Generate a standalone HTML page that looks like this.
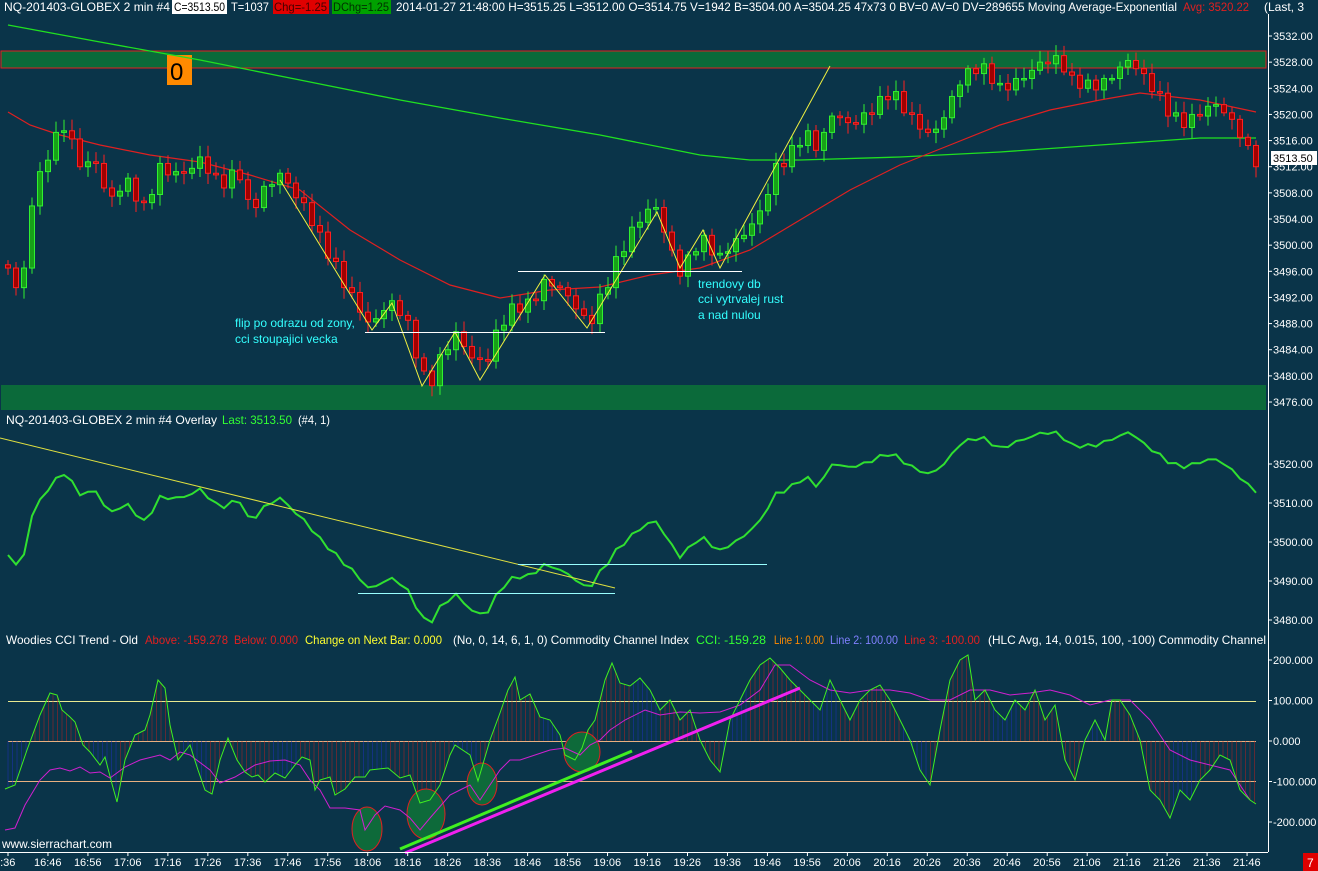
<!DOCTYPE html>
<html><head><meta charset="utf-8">
<style>
html,body{margin:0;padding:0;background:#0a3449;width:1318px;height:871px;overflow:hidden}
svg{display:block;font-family:"Liberation Sans",sans-serif}
</style></head><body>
<svg id="s" width="1318" height="871" viewBox="0 0 1318 871" xmlns="http://www.w3.org/2000/svg">
<rect width="1318" height="871" fill="#0a3449"/>
<rect x="1" y="51" width="1265" height="17" fill="#0b6a3a" stroke="#e0201e" stroke-width="1"/>
<rect x="1" y="385" width="1265" height="25" fill="#0b6a3a"/>
<rect x="167" y="55" width="25" height="30" fill="#ff8a00"/>
<text x="170" y="80" font-size="24" fill="#000">0</text>
<g id="g"></g>
<g font-size="12" fill="#fff">
<text x="4" y="11" textLength="166" lengthAdjust="spacingAndGlyphs">NQ-201403-GLOBEX  2 min   #4</text>
<rect x="172" y="0" width="55" height="14" fill="#fff"/>
<text x="174" y="11" fill="#000" textLength="51" lengthAdjust="spacingAndGlyphs">C=3513.50</text>
<text x="231" y="11" textLength="38" lengthAdjust="spacingAndGlyphs">T=1037</text>
<rect x="273" y="0" width="56" height="14" fill="#e00000"/>
<text x="274" y="11" fill="#400" textLength="53" lengthAdjust="spacingAndGlyphs">Chg=-1.25</text>
<rect x="332" y="0" width="59" height="14" fill="#00a000"/>
<text x="333" y="11" fill="#003000" textLength="56" lengthAdjust="spacingAndGlyphs">DChg=1.25</text>
<text x="396" y="11" textLength="781" lengthAdjust="spacingAndGlyphs">2014-01-27 21:48:00 H=3515.25 L=3512.00 O=3514.75 V=1942 B=3504.00 A=3504.25 47x73 0 BV=0 AV=0 DV=289655 Moving Average-Exponential</text>
<text x="1183" y="11" fill="#e02020" textLength="66" lengthAdjust="spacingAndGlyphs">Avg: 3520.22</text>
<text x="1264" y="11">(Last, 3</text>
</g>
<g font-size="12" fill="#fff">
<text x="6" y="424" textLength="211" lengthAdjust="spacingAndGlyphs">NQ-201403-GLOBEX  2 min   #4 Overlay</text>
<text x="222" y="424" fill="#3f3" textLength="70" lengthAdjust="spacingAndGlyphs">Last: 3513.50</text>
<text x="298" y="424" textLength="32" lengthAdjust="spacingAndGlyphs">(#4, 1)</text>
<text x="6" y="644" textLength="132" lengthAdjust="spacingAndGlyphs">Woodies CCI Trend - Old</text>
<text x="145" y="644" fill="#e02020" textLength="83" lengthAdjust="spacingAndGlyphs">Above: -159.278</text>
<text x="234" y="644" fill="#e02020" textLength="64" lengthAdjust="spacingAndGlyphs">Below: 0.000</text>
<text x="305" y="644" fill="#ffff30" textLength="137" lengthAdjust="spacingAndGlyphs">Change on Next Bar: 0.000</text>
<text x="453" y="644" textLength="236" lengthAdjust="spacingAndGlyphs">(No, 0, 14, 6, 1, 0)  Commodity Channel Index</text>
<text x="696" y="644" fill="#3f3" textLength="70" lengthAdjust="spacingAndGlyphs">CCI: -159.28</text>
<text x="774" y="644" fill="#ff8a00" textLength="50" lengthAdjust="spacingAndGlyphs">Line 1: 0.00</text>
<text x="830" y="644" fill="#8080ff" textLength="68" lengthAdjust="spacingAndGlyphs">Line 2: 100.00</text>
<text x="904" y="644" fill="#e02020" textLength="76" lengthAdjust="spacingAndGlyphs">Line 3: -100.00</text>
<text x="988" y="644" textLength="278" lengthAdjust="spacingAndGlyphs">(HLC Avg, 14, 0.015, 100, -100)  Commodity Channel</text>
<text x="2" y="848" textLength="110" lengthAdjust="spacingAndGlyphs">www.sierrachart.com</text>
</g>
<g font-size="12" fill="#3ff">
<text x="235" y="327">flip po odrazu od zony,</text>
<text x="235" y="343">cci stoupajici vecka</text>
<text x="698" y="288">trendovy db</text>
<text x="698" y="303">cci vytrvalej rust</text>
<text x="698" y="319">a nad nulou</text>
</g>
<line x1="1268.5" y1="14" x2="1268.5" y2="852" stroke="#fff"/>
<line x1="0" y1="852.5" x2="1268" y2="852.5" stroke="#fff"/>
<rect x="1303" y="853" width="15" height="18" fill="#e00000"/>
<text x="1307" y="867" font-size="12" fill="#fff">7</text>
</svg>
<script>
var NS="http://www.w3.org/2000/svg",G=document.getElementById("g");
function el(t,a){var e=document.createElementNS(NS,t);for(var k in a)e.setAttribute(k,a[k]);G.appendChild(e);return e}
function pl(pts,c,w){el("polyline",{points:pts.map(function(p){return p.join(",")}).join(" "),fill:"none",stroke:c,"stroke-width":w||1})}
function interp(k,x){for(var i=0;i<k.length-1;i++){if(x<=k[i+1][0]){var t=(x-k[i][0])/(k[i+1][0]-k[i][0]);return k[i][1]+t*(k[i+1][1]-k[i][1])}}return k[k.length-1][1]}
var P=[[8,3497],[22,3494],[30,3507],[50,3514],[65,3517],[80,3512],[95,3514],[110,3508],[125,3510],[145,3504],[160,3511],[180,3512],[200,3514],[220,3508],[240,3510],[250,3505],[265,3510],[280,3512],[300,3506],[320,3500],[340,3496],[355,3493],[370,3488],[390,3490],[405,3488],[420,3482],[428,3479],[440,3484],[455,3487],[470,3482],[485,3480],[500,3488],[515,3492],[530,3492],[545,3494],[560,3492],[575,3490],[588,3488],[600,3493],[615,3498],[630,3501],[655,3505],[670,3500],[680,3497],[700,3502],[720,3497],[740,3500],[760,3506],[775,3513],[790,3514],[805,3516],[820,3513],[830,3520],[850,3520],[870,3521],[890,3522],[910,3519],[930,3518],[945,3521],[960,3525],[980,3526],[1000,3524],[1020,3527],[1040,3528],[1060,3527],[1070,3524],[1090,3525],[1110,3527],[1130,3528],[1145,3524],[1165,3521],[1180,3520],[1200,3521],[1215,3521],[1230,3518],[1250,3514],[1256,3513.5]];
function py(p){return 36+(3532-p)*6.536}
function oy(p){return 464+(3520-p)*3.9}
function cy(v){return 741-v*0.405}
el("line",{x1:8,y1:701.5,x2:1256,y2:701.5,stroke:"#e8e890","stroke-width":1});
el("line",{x1:8,y1:741.5,x2:1256,y2:741.5,stroke:"#e8b080","stroke-width":1});
el("line",{x1:8,y1:781.5,x2:1256,y2:781.5,stroke:"#e8b080","stroke-width":1});
pl([[8,25],[100,42],[200,60],[300,80],[400,100],[500,118],[600,135],[700,155],[750,160],[800,160],[900,157],[1000,152],[1100,145],[1200,138],[1256,138]],"#20e020",1.3);
pl([[8,112],[30,125],[60,135],[100,145],[150,155],[200,162],[250,175],[300,190],[350,230],[400,260],[450,285],[500,298],[550,290],[600,287],[650,275],[700,268],[750,250],[800,220],[850,190],[900,165],[950,145],[1000,125],[1050,110],[1100,100],[1140,93],[1200,100],[1256,112]],"#e02020",1.2);
var prev=interp(P,8),oc=[];
for(var x=8;x<=1256;x+=8){
 var n=Math.sin(x*0.71)*1.4+Math.sin(x*1.93)*0.9;
 var c=interp(P,x)+n; c=Math.round(c*4)/4;
 var o=prev, hi=Math.max(o,c)+0.5+Math.abs(Math.sin(x*0.37))*1.2, lo=Math.min(o,c)-0.5-Math.abs(Math.cos(x*0.53))*1.2;
 var up=c>=o, col=up?"#30f030":"#ff2020", fil=up?"#18a018":"#a00000";
 el("line",{x1:x,y1:py(hi),x2:x,y2:py(lo),stroke:col,"stroke-width":1});
 var y1=py(Math.max(o,c)),y2=py(Math.min(o,c));
 el("rect",{x:x-2.5,y:y1,width:5,height:Math.max(1.5,y2-y1),fill:fil,stroke:col,"stroke-width":1});
 oc.push([x,oy(interp(P,x)+n*0.6)]);
 prev=c;
}
pl(oc,"#30e030",2);
pl([[0,438],[615,588]],"#e0e040",1);
el("line",{x1:358,y1:593.5,x2:615,y2:593.5,stroke:"#9ff"});
el("line",{x1:518,y1:564.5,x2:767,y2:564.5,stroke:"#9ff"});
pl([[280,180],[372,330],[392,303],[422,386],[455,332],[480,380],[545,275],[587,328],[657,212],[680,268],[703,230],[720,268],[830,66]],"#f0f040",1);
el("line",{x1:365,y1:332.5,x2:605,y2:332.5,stroke:"#fff"});
el("line",{x1:518,y1:271.5,x2:742,y2:271.5,stroke:"#fff"});
var C=[[5,789],[15,785],[27,750],[40,715],[50,693],[57,695],[62,710],[70,717],[75,722],[83,745],[90,752],[100,765],[105,757],[112,784],[117,802],[125,760],[135,735],[145,730],[150,715],[158,680],[165,688],[170,725],[178,760],[190,745],[198,770],[205,790],[212,794],[220,760],[228,738],[237,760],[245,772],[252,777],[258,775],[265,782],[275,773],[285,778],[295,765],[302,757],[310,760],[315,790],[320,780],[330,777],[335,795],[345,789],[355,777],[365,777],[370,770],[388,768],[400,778],[410,775],[420,803],[430,800],[440,785],[450,755],[455,745],[470,755],[478,781],[490,740],[500,713],[508,690],[515,677],[520,700],[530,694],[540,717],[550,720],[560,735],[565,755],[575,760],[582,748],[588,730],[595,720],[605,680],[612,663],[620,683],[630,686],[640,678],[650,690],[660,710],[670,700],[680,720],[690,710],[700,740],[710,760],[720,772],[730,720],[740,700],[750,680],[760,665],[770,658],[780,668],[790,680],[800,690],[810,700],[820,710],[830,680],[840,700],[850,720],[860,700],[870,690],[880,685],[890,700],[900,720],[910,740],[920,770],[930,785],[940,730],[950,680],[960,660],[968,655],[975,700],[985,690],[995,710],[1005,720],[1015,700],[1025,710],[1035,690],[1045,720],[1055,705],[1065,760],[1075,780],[1085,740],[1095,720],[1105,740],[1112,700],[1120,700],[1130,715],[1140,740],[1150,790],[1160,800],[1170,818],[1180,790],[1190,800],[1200,780],[1210,770],[1220,755],[1230,760],[1240,790],[1250,800],[1256,804]];
for(var x=8;x<=1256;x+=4.5){var v=interp(C,x);el("line",{x1:x,y1:741,x2:x,y2:v,stroke:(Math.floor(x/30)%3==0)?"#2030c0":"#c02020","stroke-width":0.8,opacity:0.6});}
var M=[[5,830],[15,828],[25,805],[40,780],[50,770],[60,768],[70,771],[80,767],[90,773],[100,772],[110,778],[125,767],[140,760],[160,755],[170,760],[180,752],[190,755],[210,770],[220,783],[235,777],[255,765],[270,761],[285,760],[300,765],[310,780],[320,790],[330,808],[345,808],[360,810],[365,830],[375,815],[385,806],[400,810],[410,818],[420,830],[430,818],[450,795],[460,790],[470,785],[480,800],[490,785],[500,770],[510,760],[520,760],[535,755],[550,750],[565,748],[580,755],[590,745],[600,740],[610,730],[625,720],[645,710],[660,715],[680,712],[700,713],[720,712],[740,705],[760,690],[775,665],[790,665],[810,680],[830,690],[850,693],[870,690],[890,690],[910,693],[930,700],[950,700],[970,690],[990,690],[1010,695],[1030,693],[1050,690],[1070,695],[1090,705],[1110,700],[1130,700],[1150,720],[1170,750],[1190,760],[1210,765],[1230,770],[1250,800]];
[[367,829,15,22],[426,814,19,25],[482,784,15,21],[582,752,18,20]].forEach(function(e){el("ellipse",{cx:e[0],cy:e[1],rx:e[2],ry:e[3],fill:"#0e6a3a",stroke:"#e02020"})});
pl(M,"#d020d0",1);
pl(C,"#40f020",1);
el("line",{x1:400,y1:849,x2:632,y2:751,stroke:"#40f020","stroke-width":3});
el("line",{x1:405,y1:853,x2:800,y2:688,stroke:"#f020f0","stroke-width":3});
function tx(x,y,s,c){var t=el("text",{x:x,y:y,"font-size":11,fill:c||"#fff"});t.textContent=s}
for(var p=3532;p>=3476;p-=4){var y=py(p);el("line",{x1:1268,y1:y,x2:1272,y2:y,stroke:"#fff"});tx(1273,y+4,p+".00")}
el("rect",{x:1271,y:151,width:46,height:14,fill:"#fff"});tx(1273,162,"3513.50","#000");
for(var p=3520;p>=3480;p-=10){var y=oy(p);el("line",{x1:1268,y1:y,x2:1272,y2:y,stroke:"#fff"});tx(1273,y+4,p+".00")}
[200,100,0,-100,-200].forEach(function(v){var y=cy(v);el("line",{x1:1268,y1:y,x2:1272,y2:y,stroke:"#fff"});tx(1273,y+4,(v>0?" ":"")+v.toFixed(3).replace(/^(\d)/," $1"))});
var h=16,m=36;
for(var i=0;i<32;i++){var x=8+i*39.97;var s=(h<10?"0":"")+h+":"+(m<10?"0":"")+m;if(i==0)s="6:36";
 el("line",{x1:x,y1:852,x2:x,y2:856,stroke:"#fff"});if(x<1262)tx(x-14,866,s);
 m+=10;if(m>=60){m-=60;h++}}
</script>
</body></html>
